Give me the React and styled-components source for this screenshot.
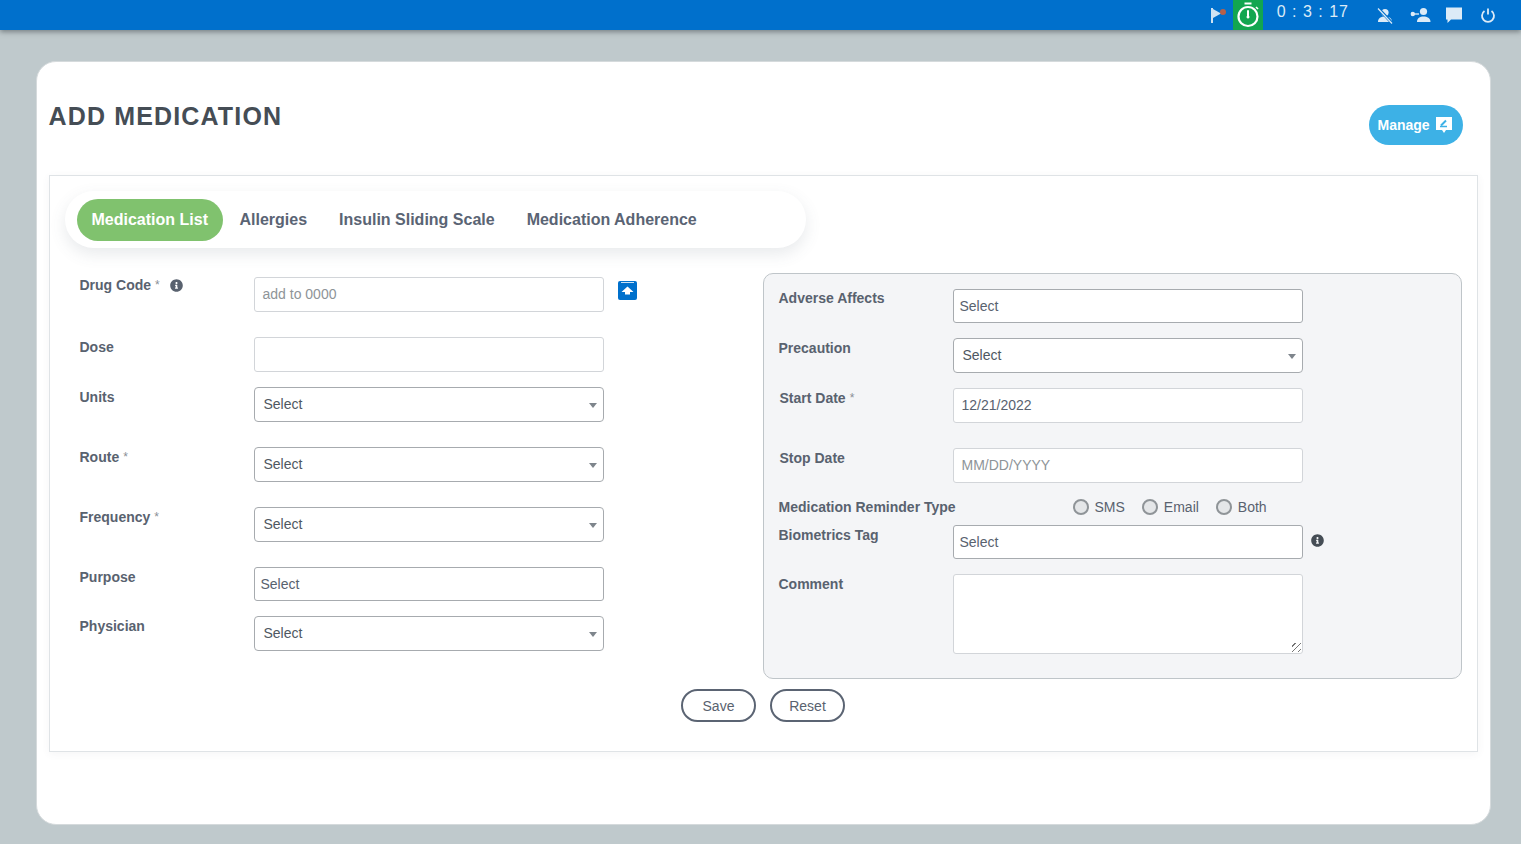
import React from 'react';
import styled, { createGlobalStyle } from 'styled-components';
import { FaInfoCircle } from 'react-icons/fa';

const GlobalStyle = createGlobalStyle`
  html, body {
    margin: 0;
    height: 100%;
    background: #bfc9cc;
    font-family: "Liberation Sans", Arial, sans-serif;
    overflow: hidden;
  }
`;

const TopBar = styled.header`
  height: 30px;
  background: #0070cc;
  box-shadow: 0 2px 5px rgba(60, 70, 75, 0.55);
  display: flex;
  justify-content: flex-end;
  align-items: center;
  color: #dcebf7;
`;

const TimerBox = styled.div`
  width: 30px;
  height: 30px;
  background: #12a650;
  display: flex;
  align-items: center;
  justify-content: center;
`;

const Clock = styled.span`
  font-size: 16px;
  letter-spacing: 1px;
  margin: -6px 27px 0 14px;
  white-space: nowrap;
`;

const BarIcon = styled.svg`
  display: block;
  margin-left: ${(p) => p.$gap || 0}px;
  margin-right: ${(p) => p.$right || 0}px;
`;

const Card = styled.main`
  box-sizing: border-box;
  width: 1455px;
  height: 764px;
  margin: 31px 0 0 35.5px;
  background: #fff;
  border: 1px solid #d5dadc;
  border-radius: 20px;
  padding: 0 12px;
`;

const Head = styled.div`
  height: 113px;
  display: flex;
  justify-content: space-between;
  align-items: flex-start;
`;

const Title = styled.h1`
  margin: 38px 0 0;
  font-size: 25px;
  line-height: 32px;
  font-weight: 700;
  letter-spacing: 1.15px;
  color: #454d55;
`;

const ManageButton = styled.button`
  box-sizing: border-box;
  width: 94px;
  height: 40px;
  margin: 43px 15px 0 0;
  padding: 0 0 0 9px;
  border: 0;
  border-radius: 20px;
  background: #3db1e6;
  color: #fff;
  font: 700 14px "Liberation Sans", sans-serif;
  display: flex;
  align-items: center;
  gap: 5px;
`;

const Panel = styled.section`
  box-sizing: border-box;
  width: 1429px;
  height: 577px;
  border: 1px solid #dfe3e6;
  box-shadow: 0 2px 8px rgba(80, 90, 100, 0.06);
  padding: 15px 15px 0;
`;

const TabBar = styled.nav`
  box-sizing: border-box;
  width: 741px;
  height: 57px;
  border-radius: 29px;
  background: #fff;
  box-shadow: 0 6px 16px rgba(80, 90, 110, 0.13);
  padding: 8px 12px;
  display: flex;
  gap: 16.5px;
`;

const Tab = styled.a`
  height: 42px;
  line-height: 42px;
  border-radius: 21px;
  font-size: 16px;
  font-weight: 700;
  color: ${(p) => (p.$active ? '#fff' : '#5a6474')};
  background: ${(p) => (p.$active ? '#80c26e' : 'transparent')};
  padding: 0 ${(p) => (p.$active ? 15 : 0)}px;
  margin-right: ${(p) => (p.$active ? 0 : 15.5)}px;
  white-space: nowrap;
`;

const Columns = styled.div`
  display: flex;
  justify-content: space-between;
  margin-top: 25px;
`;

const LeftColumn = styled.div`
  width: 620px;
  padding: 4px 0 0 15px;
`;

const RightColumn = styled.div`
  box-sizing: border-box;
  width: 699px;
  height: 406px;
  background: #f4f5f7;
  border: 1px solid #bfc5c9;
  border-radius: 10px;
  padding: 15px 15px 0;
`;

const Row = styled.div`
  display: flex;
  align-items: flex-start;
  margin-bottom: ${(p) => p.$gap ?? 15}px;
`;

const Label = styled.label`
  width: ${(p) => p.$width || 174}px;
  flex: none;
  padding-top: ${(p) => p.$top ?? 0}px;
  font-size: 14px;
  line-height: 16px;
  font-weight: 700;
  color: #59626f;
  white-space: nowrap;
  display: flex;
  align-items: center;
`;

const Star = styled.span`
  font-weight: 400;
  font-size: 12px;
  margin-left: 4px;
  color: #8a8f96;
`;

const InfoIcon = styled(FaInfoCircle)`
  width: 13px;
  height: 13px;
  color: ${(p) => p.$color || '#59626f'};
  flex: none;
`;

const Input = styled.div`
  box-sizing: border-box;
  width: 350px;
  height: ${(p) => p.$h || 35}px;
  flex: none;
  background: #fff;
  border: 1px solid ${(p) => (p.$dark ? '#a7abaf' : '#d2d5d9')};
  border-radius: 3px;
  padding: 0 ${(p) => p.$pad || 8}px;
  line-height: ${(p) => (p.$h || 35) - 2}px;
  font-size: 14px;
  color: ${(p) => (p.$muted ? '#8e9498' : '#59626f')};
`;

const SelectBox = styled(Input)`
  position: relative;
  border-color: #a7abaf;
  border-radius: 4px;
  color: #4f5862;
  &::after {
    content: '';
    position: absolute;
    right: 6px;
    top: 15px;
    border: 4px solid transparent;
    border-top: 5px solid #7e858c;
    border-bottom: 0;
  }
`;

const Comment = styled(Input)`
  position: relative;
  height: 80px;
  &::after {
    content: '';
    position: absolute;
    right: 1px;
    bottom: 1px;
    width: 9px;
    height: 9px;
    background: repeating-linear-gradient(135deg, transparent 0 2px, #777 2px 3px, transparent 3px 4px);
  }
`;

const BlueSquare = styled.div`
  width: 19px;
  height: 19px;
  margin: 4px 0 0 14px;
  border-radius: 2px;
  background: #0070cc;
  display: flex;
  align-items: center;
  justify-content: center;
`;

const RadioGroup = styled.div`
  display: flex;
  align-items: center;
  margin-left: 117px;
  margin-top: -1px;
`;

const RadioItem = styled.span`
  display: flex;
  align-items: center;
  gap: 6px;
  margin-right: 17px;
  font-size: 14px;
  line-height: 18px;
  color: #59626f;
`;

const RadioDot = styled.i`
  box-sizing: border-box;
  width: 16px;
  height: 16px;
  border-radius: 50%;
  border: 2px solid #8f9498;
  background: #e4e6e8;
`;

const ButtonRow = styled.div`
  display: flex;
  justify-content: center;
  gap: 14px;
  margin-top: 10px;
  padding-right: 0;
`;

const OutlineButton = styled.button`
  box-sizing: border-box;
  width: 75px;
  height: 33px;
  border: 2px solid #5b6473;
  border-radius: 17px;
  background: #fff;
  color: #59626f;
  font: 14px "Liberation Sans", sans-serif;
`;

const FlagIcon = () => (
  <BarIcon width="18" height="18" viewBox="0 0 18 18" $right={5}>
    <rect x="1" y="2" width="2" height="15" fill="#cfe3f3" />
    <path d="M3 3 L11 7.5 L3 12 Z" fill="#cfe3f3" />
    <circle cx="13" cy="6" r="3" fill="#b5604a" />
  </BarIcon>
);

const TimerIcon = () => (
  <svg width="24" height="28" viewBox="0 0 24 28" fill="none" stroke="#fff">
    <path d="M8.5 2.5h7" strokeWidth="2" />
    <circle cx="12" cy="15.5" r="9.5" strokeWidth="2.2" />
    <path d="M12 10v6" strokeWidth="2" strokeLinecap="round" />
    <circle cx="12" cy="16" r="1.2" fill="#fff" strokeWidth="0.6" />
    <path d="M20 6l2 2" strokeWidth="1.6" />
  </svg>
);

const NoUserIcon = () => (
  <BarIcon width="18" height="18" viewBox="0 0 18 18">
    <circle cx="9" cy="6.5" r="3.6" fill="#dcebf7" />
    <path d="M2 16c0-4 3-5.5 7-5.5s7 1.5 7 5.5z" fill="#dcebf7" />
    <path d="M2 2l14 15" stroke="#0070cc" strokeWidth="3" />
    <path d="M2 2.5l14 15" stroke="#dcebf7" strokeWidth="1.2" />
  </BarIcon>
);

const LinkedUserIcon = () => (
  <BarIcon width="21" height="16" viewBox="0 0 21 16" $gap={16}>
    <circle cx="13.5" cy="4.5" r="3.6" fill="#dcebf7" />
    <path d="M7 15c0-4 3-5.5 6.5-5.5S20.500 11 20.500 15z" fill="#dcebf7" />
    <circle cx="2.800" cy="7" r="2.200" fill="#dcebf7" />
    <path d="M3 7h6" stroke="#dcebf7" strokeWidth="1.4" />
  </BarIcon>
);

const ChatIcon = () => (
  <BarIcon width="18" height="18" viewBox="0 0 18 18" $gap={14}>
    <path d="M1 1.500h16v12H6l-3.500 3.500v-3.500H1z" fill="#dcebf7" />
  </BarIcon>
);

const PowerIcon = () => (
  <BarIcon width="16" height="16" viewBox="0 0 16 16" fill="none" stroke="#dcebf7" strokeWidth="1.800" $gap={17} $right={25}>
    <path d="M4.500 4a6 6 0 1 0 7 0" />
    <path d="M8 1.500v6" />
  </BarIcon>
);

const ManageIcon = () => (
  <svg width="18" height="19" viewBox="0 0 18 19">
    <path d="M1 1h16v13h-6l-2 3-2-3H1z" fill="#fff" />
    <path d="M5 10.500h7" stroke="#3db1e6" strokeWidth="1.500" />
    <path d="M6 9.500l5-5" stroke="#3db1e6" strokeWidth="2" />
  </svg>
);

const UploadIcon = () => (
  <svg width="19" height="19" viewBox="0 0 19 19">
    <path d="M3 1.500h13" stroke="#fff" strokeWidth="0.800" />
    <path d="M9.500 5.500L15.500 11H12v2.500H7V11H3.500z" fill="#fff" />
  </svg>
);

const leftSelect = (label, required, gap) => (
  <Row $gap={gap}>
    <Label $top={2}>{label}{required && <Star>*</Star>}</Label>
    <SelectBox $dark $pad={9}>Select</SelectBox>
  </Row>
);

export default function App() {
  return (
    <>
      <GlobalStyle />
      <TopBar>
        <FlagIcon />
        <TimerBox><TimerIcon /></TimerBox>
        <Clock>0 : 3 : 17</Clock>
        <NoUserIcon />
        <LinkedUserIcon />
        <ChatIcon />
        <PowerIcon />
      </TopBar>
      <Card>
        <Head>
          <Title>ADD MEDICATION</Title>
          <ManageButton>Manage <ManageIcon /></ManageButton>
        </Head>
        <Panel>
          <TabBar>
            <Tab $active>Medication List</Tab>
            <Tab>Allergies</Tab>
            <Tab>Insulin Sliding Scale</Tab>
            <Tab>Medication Adherence</Tab>
          </TabBar>
          <Columns>
            <LeftColumn>
              <Row $gap={25}>
                <Label $top={-2}>Drug Code<Star>*</Star><InfoIcon style={{ marginLeft: 10 }} /></Label>
                <Input $muted>add to 0000</Input>
                <BlueSquare><UploadIcon /></BlueSquare>
              </Row>
              <Row $gap={15}>
                <Label $top={2}>Dose</Label>
                <Input />
              </Row>
              {leftSelect('Units', false, 25)}
              {leftSelect('Route', true, 25)}
              {leftSelect('Frequency', true, 25)}
              <Row $gap={15}>
                <Label $top={2}>Purpose</Label>
                <Input $h={34} $dark $pad={6}>Select</Input>
              </Row>
              {leftSelect('Physician', false, 0)}
            </LeftColumn>
            <RightColumn>
              <Row $gap={15}>
                <Label $width={174} $top={1}>Adverse Affects</Label>
                <Input $h={34} $dark $pad={6}>Select</Input>
              </Row>
              <Row $gap={15}>
                <Label $width={174} $top={2}>Precaution</Label>
                <SelectBox $pad={9}>Select</SelectBox>
              </Row>
              <Row $gap={25}>
                <Label $width={173} $top={2} style={{ marginLeft: 1 }}>Start Date<Star>*</Star></Label>
                <Input $pad={8}>12/21/2022</Input>
              </Row>
              <Row $gap={16}>
                <Label $width={173} $top={2} style={{ marginLeft: 1 }}>Stop Date</Label>
                <Input $muted>MM/DD/YYYY</Input>
              </Row>
              <Row $gap={9}>
                <Label $width={177}>Medication Reminder Type</Label>
                <RadioGroup>
                  <RadioItem><RadioDot />SMS</RadioItem>
                  <RadioItem><RadioDot />Email</RadioItem>
                  <RadioItem><RadioDot />Both</RadioItem>
                </RadioGroup>
              </Row>
              <Row $gap={15}>
                <Label $top={2}>Biometrics Tag</Label>
                <Input $h={34} $dark $pad={6}>Select</Input>
                <InfoIcon $color="#454d55" style={{ margin: '9px 0 0 8px' }} />
              </Row>
              <Row $gap={0}>
                <Label $top={2}>Comment</Label>
                <Comment />
              </Row>
            </RightColumn>
          </Columns>
          <ButtonRow>
            <OutlineButton>Save</OutlineButton>
            <OutlineButton>Reset</OutlineButton>
          </ButtonRow>
        </Panel>
      </Card>
    </>
  );
}
